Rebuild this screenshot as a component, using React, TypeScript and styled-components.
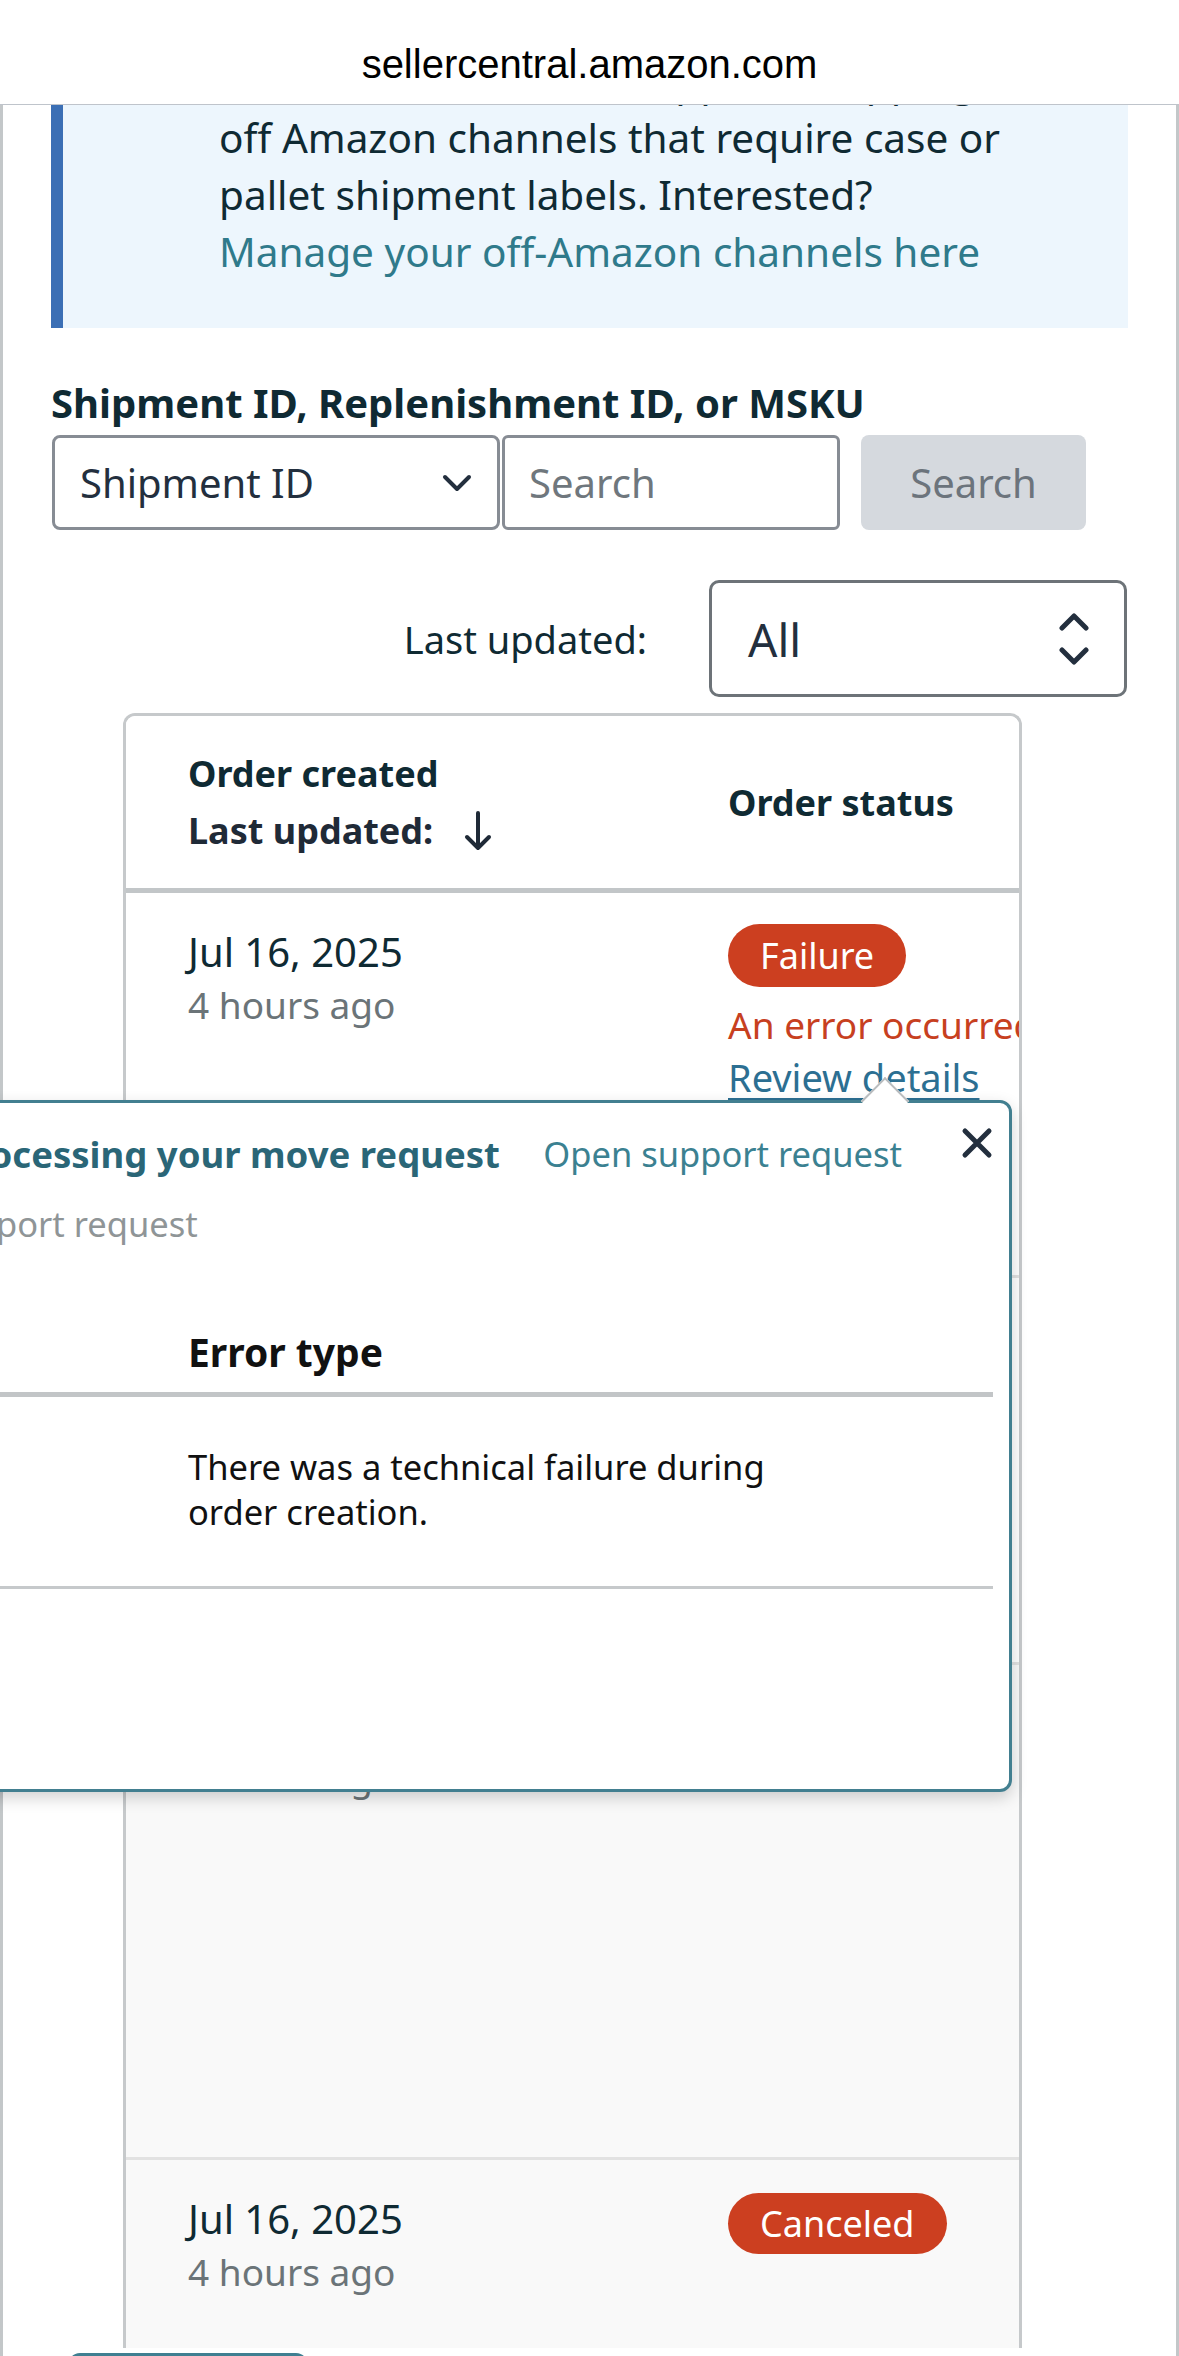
import styled, { createGlobalStyle } from "styled-components";

const GlobalStyle = createGlobalStyle`
  html, body {
    margin: 0;
    padding: 0;
    background: #fff;
    overflow-x: hidden;
  }
  body {
    font-family: "Noto Sans", "Open Sans", sans-serif;
    color: #0f2a33;
  }
  * {
    box-sizing: border-box;
  }
`;

const UrlBar = styled.header`
  position: relative;
  z-index: 5;
  height: 105px;
  padding-top: 44px;
  background: #fff;
  border-bottom: 1px solid #bfc4cb;
  font-family: "Liberation Sans", Arial, sans-serif;
  font-size: 40px;
  line-height: 40px;
  text-align: center;
  color: #000;
`;

const Page = styled.main`
  position: relative;
  display: flow-root;
  border-left: 3px solid #c3c7c9;
  border-right: 3px solid #c3c7c9;
`;

const InfoBox = styled.section`
  margin: -75px 48px 0;
  padding: 22px 40px 48px 156px;
  background: #edf6fd;
  border-left: 12px solid #3b6fb5;
  font-size: 40.5px;
  line-height: 57px;
  color: #0f2a33;
  white-space: nowrap;
`;

const InfoLink = styled.a`
  color: #2f7a8b;
  text-decoration: none;
`;

const FieldLabel = styled.label`
  display: block;
  margin: 50px 48px 7px;
  font-weight: 700;
  font-size: 40px;
  line-height: 50px;
  color: #0f2a33;
`;

const SearchRow = styled.div`
  display: flex;
  height: 95px;
  margin-left: 49px;
`;

const SelectBox = styled.div`
  width: 448px;
  display: flex;
  align-items: center;
  justify-content: space-between;
  padding: 0 25px;
  border: 3px solid #878c94;
  border-radius: 8px;
  font-size: 40px;
  color: #232f3e;
`;

const SearchInput = styled.input`
  width: 338px;
  margin-left: 2px;
  padding: 0 24px;
  border: 3px solid #878c94;
  border-radius: 6px;
  font-family: inherit;
  font-size: 40px;
  color: #232f3e;
  background: #fff;
  &::placeholder {
    color: #6f777d;
  }
`;

const SearchButton = styled.button`
  width: 225px;
  margin-left: 21px;
  border: none;
  border-radius: 8px;
  background: #d5d9de;
  font-family: inherit;
  font-size: 40px;
  color: #6c747c;
`;

const FilterRow = styled.div`
  display: flex;
  justify-content: flex-end;
  align-items: center;
  gap: 62px;
  margin: 50px 49px 0 0;
`;

const FilterLabel = styled.span`
  font-size: 38px;
  color: #0f2a33;
`;

const SortSelect = styled.div`
  width: 418px;
  height: 117px;
  display: flex;
  align-items: center;
  justify-content: space-between;
  padding: 0 35px 0 36px;
  border: 3px solid #6d7378;
  border-radius: 10px;
  font-size: 46px;
  color: #232f3e;
`;

const TableFrame = styled.div`
  width: 899px;
  margin: 16px 0 0 120px;
  border: 3px solid #c6c9cb;
  border-bottom: none;
  border-radius: 12px 12px 0 0;
  overflow: hidden;
`;

const Row = styled.div<{ $height: number; $shaded?: boolean; $line?: string }>`
  display: grid;
  grid-template-columns: 540px 480px;
  height: ${(p) => p.$height}px;
  background: ${(p) => (p.$shaded ? "#f9f9f9" : "#fff")};
  border-bottom: ${(p) => p.$line ?? "3px solid #e2e2e2"};
`;

const HeadCell = styled.div`
  align-self: center;
  padding-left: 62px;
  font-weight: 700;
  font-size: 36px;
  line-height: 57px;
  color: #0f2a33;
  display: flex;
  flex-direction: column;
`;

const SortLine = styled.span`
  display: flex;
  align-items: center;
  gap: 30px;
  color: #1f2a37;
`;

const Cell = styled.div<{ $top: number }>`
  padding: ${(p) => p.$top}px 0 0 62px;
  display: flex;
  flex-direction: column;
  align-items: flex-start;
`;

const DateText = styled.span`
  font-size: 40px;
  line-height: 53px;
  color: #0f2a33;
`;

const AgoText = styled.span`
  font-size: 37px;
  line-height: 53px;
  color: #6b7478;
`;

const Badge = styled.span<{ $height: number }>`
  display: inline-flex;
  align-items: center;
  height: ${(p) => p.$height}px;
  padding: 0 32px;
  border-radius: 32px;
  background: #cc3f20;
  color: #fff;
  font-size: 36px;
`;

const ErrorText = styled.span`
  margin-top: 11px;
  font-size: 37px;
  line-height: 53px;
  color: #c7401f;
  white-space: nowrap;
`;

const ReviewLink = styled.a`
  font-size: 38px;
  line-height: 53px;
  color: #2c6f92;
  text-decoration: underline;
  text-decoration-thickness: 3px;
  text-underline-offset: 6px;
  white-space: nowrap;
`;

const PagerButton = styled.div`
  width: 240px;
  height: 60px;
  margin: 5px 0 0 65px;
  border: 3px solid #3f7f91;
  border-radius: 12px;
  background: #fff;
`;

const Popover = styled.div`
  position: absolute;
  z-index: 2;
  top: 995px;
  right: 164px;
  width: 1266px;
  height: 692px;
  padding: 27px 16px 0 40px;
  background: #fff;
  border: 3px solid #427f90;
  border-radius: 12px;
  box-shadow: 0 6px 16px rgba(0, 0, 0, 0.18);

  &::before {
    content: "";
    position: absolute;
    top: -19px;
    right: 107px;
    width: 32px;
    height: 32px;
    background: #fff;
    border-top: 2px solid #b9bcbe;
    border-left: 2px solid #b9bcbe;
    transform: rotate(45deg);
  }
`;

const PopHeader = styled.div`
  display: flex;
  align-items: flex-start;
`;

const PopTitle = styled.span`
  font-weight: 700;
  font-size: 36.5px;
  line-height: 48px;
  color: #2a6677;
  white-space: nowrap;
`;

const PopLink = styled.a`
  margin-left: auto;
  font-size: 34.5px;
  line-height: 48px;
  color: #3b8191;
  white-space: nowrap;
`;

const CloseButton = styled.button`
  display: flex;
  margin: -3px 0 0 59px;
  padding: 0;
  border: none;
  background: none;
`;

const PopSub = styled.div`
  margin-top: 24px;
  font-size: 34.5px;
  line-height: 44px;
  color: #8f9597;
  white-space: nowrap;
`;

const ErrTable = styled.div`
  display: grid;
  grid-template-columns: 399px 1fr;
  margin-top: 81px;
`;

const ErrHead = styled.div`
  padding-bottom: 15px;
  border-bottom: 5px solid #c2c5c7;
  font-weight: 700;
  font-size: 39px;
  line-height: 50px;
  color: #111;
`;

const ErrCell = styled.div`
  padding: 47px 0 52px;
  border-bottom: 3px solid #c6c9cb;
  font-size: 34.5px;
  line-height: 45px;
  color: #111;
`;

const ErrText = styled.p`
  margin: 0;
  max-width: 620px;
`;

const ChevronDown = () => (
  <svg width="30" height="18" viewBox="0 0 30 18">
    <path d="M3 3 L15 15 L27 3" stroke="#232f3e" strokeWidth="4" fill="none" strokeLinecap="round" strokeLinejoin="round" />
  </svg>
);

const UpDown = () => (
  <svg width="30" height="54" viewBox="0 0 30 54">
    <path d="M3 16 L15 4 L27 16 M3 38 L15 50 L27 38" stroke="#232f3e" strokeWidth="5" fill="none" strokeLinecap="round" strokeLinejoin="round" />
  </svg>
);

const SortArrow = () => (
  <svg width="30" height="42" viewBox="0 0 30 42">
    <path d="M15 3 V38 M4 27 L15 38 L26 27" stroke="#1f2a37" strokeWidth="4" fill="none" strokeLinecap="round" strokeLinejoin="round" />
  </svg>
);

const CloseIcon = () => (
  <svg width="32" height="32" viewBox="0 0 32 32">
    <path d="M4 4 L28 28 M28 4 L4 28" stroke="#232f3e" strokeWidth="5" fill="none" strokeLinecap="round" />
  </svg>
);

export default function App() {
  return (
    <>
      <GlobalStyle />
      <UrlBar>sellercentral.amazon.com</UrlBar>
      <Page>
        <InfoBox>
          Send to Amazon now supports shipping to
          <br />
          off Amazon channels that require case or
          <br />
          pallet shipment labels. Interested?
          <br />
          <InfoLink>Manage your off-Amazon channels here</InfoLink>
        </InfoBox>

        <FieldLabel>Shipment ID, Replenishment ID, or MSKU</FieldLabel>
        <SearchRow>
          <SelectBox>
            Shipment ID
            <ChevronDown />
          </SelectBox>
          <SearchInput placeholder="Search" />
          <SearchButton>Search</SearchButton>
        </SearchRow>

        <FilterRow>
          <FilterLabel>Last updated:</FilterLabel>
          <SortSelect>
            All
            <UpDown />
          </SortSelect>
        </FilterRow>

        <TableFrame>
          <Row $height={177} $line="5px solid #c2c6c8">
            <HeadCell>
              <span>Order created</span>
              <SortLine>
                Last updated:
                <SortArrow />
              </SortLine>
            </HeadCell>
            <HeadCell>Order status</HeadCell>
          </Row>
          <Row $height={385}>
            <Cell $top={32}>
              <DateText>Jul 16, 2025</DateText>
              <AgoText>4 hours ago</AgoText>
            </Cell>
            <Cell $top={31}>
              <Badge $height={63}>Failure</Badge>
              <ErrorText>An error occurred</ErrorText>
              <ReviewLink>Review details</ReviewLink>
            </Cell>
          </Row>
          <Row $height={387}>
            <Cell $top={32}>
              <DateText>Jul 16, 2025</DateText>
              <AgoText>4 hours ago</AgoText>
            </Cell>
            <Cell $top={31}>
              <Badge $height={63}>Failure</Badge>
            </Cell>
          </Row>
          <Row $height={495} $shaded>
            <Cell $top={32}>
              <DateText>Jul 16, 2025</DateText>
              <AgoText>4 hours ago</AgoText>
            </Cell>
            <Cell $top={31}>
              <Badge $height={63}>Failure</Badge>
            </Cell>
          </Row>
          <Row $height={188} $shaded $line="none">
            <Cell $top={32}>
              <DateText>Jul 16, 2025</DateText>
              <AgoText>4 hours ago</AgoText>
            </Cell>
            <Cell $top={33}>
              <Badge $height={61}>Canceled</Badge>
            </Cell>
          </Row>
        </TableFrame>
        <PagerButton />

        <Popover>
          <PopHeader>
            <PopTitle>Problem processing your move request</PopTitle>
            <PopLink>Open support request</PopLink>
            <CloseButton aria-label="Close">
              <CloseIcon />
            </CloseButton>
          </PopHeader>
          <PopSub>No open support request</PopSub>
          <ErrTable>
            <ErrHead>SKU</ErrHead>
            <ErrHead>Error type</ErrHead>
            <ErrCell>—</ErrCell>
            <ErrCell>
              <ErrText>There was a technical failure during order creation.</ErrText>
            </ErrCell>
          </ErrTable>
        </Popover>
      </Page>
    </>
  );
}
